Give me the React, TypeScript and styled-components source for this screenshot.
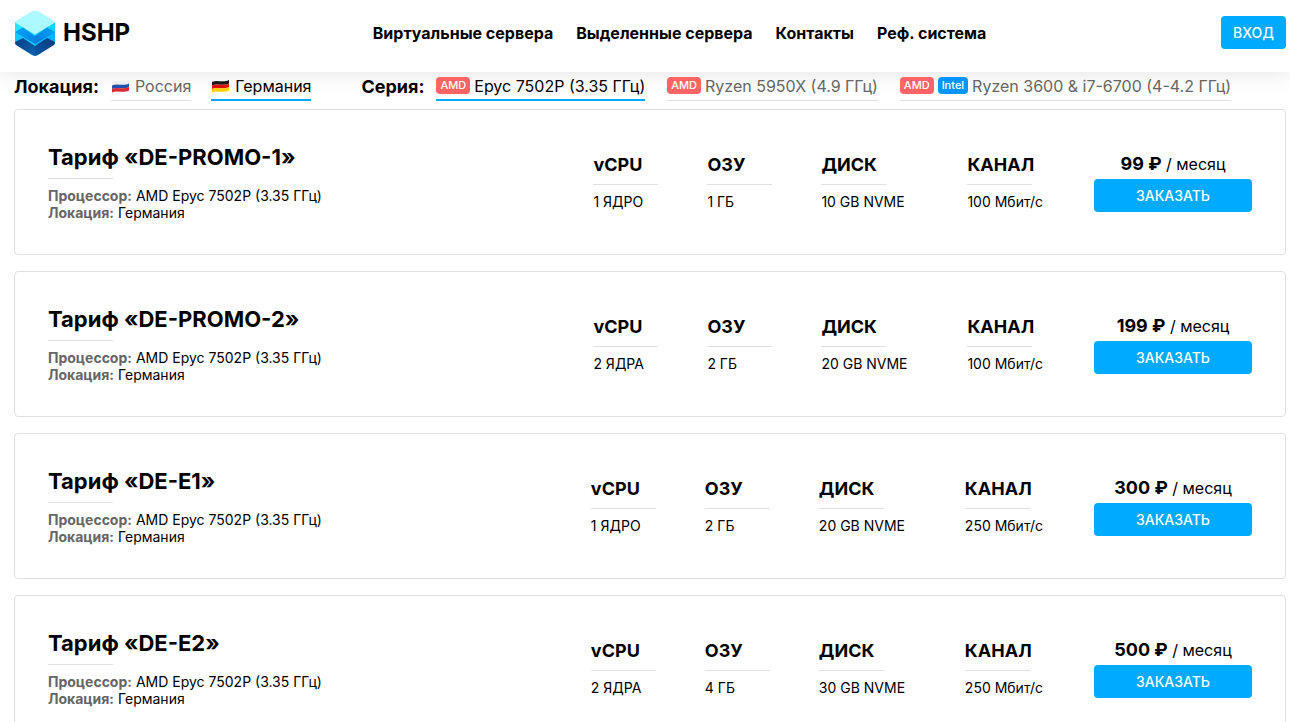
import React from "react";
import styled, { createGlobalStyle } from "styled-components";

const GlobalStyle = createGlobalStyle`
  * { box-sizing: border-box; }
  body {
    margin: 0;
    background: #fff;
    color: #000;
    font-family: Inter, "Liberation Sans", sans-serif;
    font-size: 14px;
    line-height: 17px;
    overflow-x: hidden;
  }
  h2, h3, p { margin: 0; padding: 0; }
  a { color: inherit; text-decoration: none; }
`;

const Header = styled.header`
  display: flex;
  align-items: center;
  justify-content: space-between;
  height: 72px;
  padding: 0 4px 7px 14px;
  background: #fff;
  box-shadow: 0 0 24px rgba(0, 0, 0, 0.12);
`;

const Brand = styled.a`
  display: flex;
  align-items: center;
  gap: 7px;
  padding-right: 8px;
  font-size: 24px;
  line-height: 32px;
  font-weight: 700;
`;

const Nav = styled.nav`
  display: flex;
  gap: 23px;
  font-size: 16px;
  line-height: 20px;
  font-weight: 700;
`;

const Button = styled.button<{ $wide?: boolean }>`
  height: 33px;
  width: ${(p) => (p.$wide ? "158px" : "65px")};
  padding: 0;
  border: 0;
  border-radius: 4px;
  background: #00aaff;
  color: #fff;
  font: 500 14px/17px Inter, "Liberation Sans", sans-serif;
  cursor: pointer;
`;

const Filters = styled.section`
  display: flex;
  gap: 50px;
  height: 37px;
  padding: 0 14px;
`;

const FilterGroup = styled.div`
  display: flex;
  align-items: flex-start;
  gap: 12px;
`;

const Tabs = styled.div<{ $wide?: boolean }>`
  display: flex;
  gap: ${(p) => (p.$wide ? "22px" : "20px")};
`;

const FilterLabel = styled.h3`
  padding-top: 4px;
  font-size: 18px;
  line-height: 22px;
  font-weight: 700;
`;

const Tab = styled.a<{ $active?: boolean }>`
  display: flex;
  align-items: center;
  gap: 4px;
  height: 29px;
  padding-bottom: ${(p) => (p.$active ? "0" : "1px")};
  font-size: 16px;
  line-height: 20px;
  white-space: nowrap;
  color: ${(p) => (p.$active ? "#000" : "#666")};
  border-bottom: ${(p) => (p.$active ? "2px solid #00aaff" : "1px solid #e0e0e0")};
`;

const Badge = styled.span<{ $intel?: boolean }>`
  padding: 0 4px;
  border-radius: 4px;
  background: ${(p) => (p.$intel ? "#0095ff" : "#ff6464")};
  color: #fff;
  font-size: 11px;
  line-height: 17px;
  font-weight: 500;
`;

const Plans = styled.main`
  display: flex;
  flex-direction: column;
  gap: 16px;
  padding: 0 4px 16px 14px;
`;

const Card = styled.article`
  display: flex;
  justify-content: space-between;
  padding: 33px;
  min-height: 146px;
  border: 1px solid #e0e0e0;
  border-radius: 4px;
`;

const Title = styled.h2`
  font-size: 22px;
  line-height: 28px;
  font-weight: 700;
`;

const Rule = styled.div`
  width: 65px;
  height: 1px;
  margin: 7px 0 8px;
  background: #e0e0e0;
`;

const Info = styled.p`
  b {
    color: #666;
    font-weight: 700;
  }
`;

const Details = styled.div`
  display: flex;
  gap: 49px;
`;

const Spec = styled.div<{ $size?: string }>`
  min-width: ${(p) => p.$size || "65px"};
  padding-top: 10px;
`;

const SpecName = styled.h3`
  font-size: 18px;
  line-height: 24px;
  font-weight: 700;
`;

const Order = styled.div`
  display: flex;
  flex-direction: column;
  align-items: center;
  margin-left: 2px;
  padding-top: 9px;
`;

const Price = styled.p`
  font-size: 16px;
  line-height: 23px;
  margin-bottom: 3px;

  b {
    font-size: 18px;
    font-weight: 700;
  }
`;

const Logo = () => (
  <svg width="42" height="46" viewBox="0 0 42 46" aria-hidden="true">
    <defs>
      <linearGradient id="midLeft" x1="0" y1="0" x2="1" y2="1">
        <stop offset="0" stopColor="#00a8fa" />
        <stop offset="1" stopColor="#0080e4" />
      </linearGradient>
      <linearGradient id="midRight" x1="0" y1="1" x2="1" y2="0">
        <stop offset="0" stopColor="#0078dc" />
        <stop offset="1" stopColor="#00a4f8" />
      </linearGradient>
      <linearGradient id="lowLeft" x1="0" y1="0" x2="1" y2="1">
        <stop offset="0" stopColor="#043c80" />
        <stop offset="1" stopColor="#0c64b4" />
      </linearGradient>
      <linearGradient id="lowRight" x1="0" y1="1" x2="1" y2="0">
        <stop offset="0" stopColor="#0c58a4" />
        <stop offset="1" stopColor="#043a7c" />
      </linearGradient>
    </defs>
    <path d="M1 31L9 27L21 35V46Q20 46 18 45L2 35Q1 34 1 33Z" fill="url(#lowLeft)" />
    <path d="M41 31L33 27L21 35V46Q22 46 24 45L40 35Q41 34 41 33Z" fill="url(#lowRight)" />
    <path d="M1 21L21 32V36L9 28L1 32Z" fill="#0cccff" />
    <path d="M41 21L21 32V36L33 28L41 32Z" fill="#00b4fc" />
    <path d="M1 21L9 16L21 24V34L1 22Z" fill="url(#midLeft)" />
    <path d="M41 21L33 16L21 24V34L41 22Z" fill="url(#midRight)" />
    <path d="M1 12L21 24V26L9 17.500L1 22Z" fill="#28e4ff" />
    <path d="M41 12L21 24V26L33 17.500L41 22Z" fill="#10d4ff" />
    <path d="M18 1.200Q21 -0.400 24 1.200L40 11Q41.500 12 40 13L21 24.500L2 13Q0.500 12 2 11Z" fill="#acf9ff" />
  </svg>
);

const Flag = ({ colors }: { colors: string[] }) => (
  <svg width="20" height="14" viewBox="0 0 20 14" aria-hidden="true">
    {colors.map((c, i) => (
      <path
        key={c}
        transform={`translate(0 ${i * 3.5})`}
        d="M1 3C6 0.500 12 4 18 1V4.500C12 7.500 6 4 1 6.500Z"
        fill={c}
      />
    ))}
  </svg>
);

const nav = ["Виртуальные сервера", "Выделенные сервера", "Контакты", "Реф. система"];

const plans = [
  { name: "DE-PROMO-1", cpu: "1 ЯДРО", ram: "1 ГБ", disk: "10 GB NVME", net: "100 Мбит/с", price: 99 },
  { name: "DE-PROMO-2", cpu: "2 ЯДРА", ram: "2 ГБ", disk: "20 GB NVME", net: "100 Мбит/с", price: 199 },
  { name: "DE-E1", cpu: "1 ЯДРО", ram: "2 ГБ", disk: "20 GB NVME", net: "250 Мбит/с", price: 300 },
  { name: "DE-E2", cpu: "2 ЯДРА", ram: "4 ГБ", disk: "30 GB NVME", net: "250 Мбит/с", price: 500 },
];

export default function App() {
  return (
    <>
      <GlobalStyle />
      <Header>
        <Brand href="#">
          <Logo />
          HSHP
        </Brand>
        <Nav>
          {nav.map((item) => (
            <a href="#" key={item}>{item}</a>
          ))}
        </Nav>
        <Button>ВХОД</Button>
      </Header>
      <Filters>
        <FilterGroup>
          <FilterLabel>Локация:</FilterLabel>
          <Tabs>
            <Tab href="#"><Flag colors={["#eeeeee", "#2450b0", "#d82c34"]} />Россия</Tab>
            <Tab href="#" $active><Flag colors={["#181818", "#e01010", "#ffce00"]} />Германия</Tab>
          </Tabs>
        </FilterGroup>
        <FilterGroup>
          <FilterLabel>Серия:</FilterLabel>
          <Tabs $wide>
            <Tab href="#" $active><Badge>AMD</Badge>Epyc 7502P (3.35 ГГц)</Tab>
            <Tab href="#"><Badge>AMD</Badge>Ryzen 5950X (4.9 ГГц)</Tab>
            <Tab href="#"><Badge>AMD</Badge><Badge $intel>Intel</Badge>Ryzen 3600 &amp; i7-6700 (4-4.2 ГГц)</Tab>
          </Tabs>
        </FilterGroup>
      </Filters>
      <Plans>
        {plans.map((plan) => (
          <Card key={plan.name}>
            <div>
              <Title>Тариф «{plan.name}»</Title>
              <Rule />
              <Info><b>Процессор:</b> AMD Epyc 7502P (3.35 ГГц)</Info>
              <Info><b>Локация:</b> Германия</Info>
            </div>
            <Details>
              <Spec><SpecName>vCPU</SpecName><Rule /><p>{plan.cpu}</p></Spec>
              <Spec><SpecName>ОЗУ</SpecName><Rule /><p>{plan.ram}</p></Spec>
              <Spec $size="97px"><SpecName>ДИСК</SpecName><Rule /><p>{plan.disk}</p></Spec>
              <Spec><SpecName>КАНАЛ</SpecName><Rule /><p>{plan.net}</p></Spec>
              <Order>
                <Price><b>{plan.price} ₽</b> / месяц</Price>
                <Button $wide>ЗАКАЗАТЬ</Button>
              </Order>
            </Details>
          </Card>
        ))}
      </Plans>
    </>
  );
}
